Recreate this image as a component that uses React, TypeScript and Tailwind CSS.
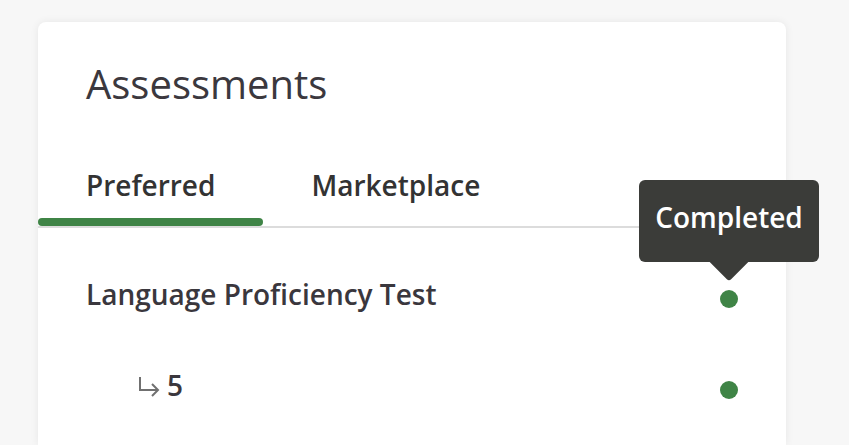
const font = { fontFamily: '"Open Sans", "Noto Sans", sans-serif' };

function StatusDot({ tooltip }: { tooltip?: string }) {
  return (
    <div className="relative mt-[10px] h-[18px] w-[18px] shrink-0 rounded-full bg-[#3f8446]">
      {tooltip && (
        <div className="absolute bottom-[46px] left-1/2 -translate-x-1/2">
          <div className="relative z-10 flex h-[82px] w-[180px] items-center justify-center rounded-md bg-[#3b3c39] pb-[8px] text-[28px] font-semibold leading-none text-white">
            {tooltip}
          </div>
          <div className="absolute left-1/2 top-[64px] h-[31px] w-[31px] -translate-x-1/2 rotate-45 rounded-[3px] bg-[#3b3c39]" />
        </div>
      )}
    </div>
  );
}

function SubArrow() {
  return (
    <svg width="22" height="22" viewBox="0 0 22 22" className="mr-[7px] mt-[4px]">
      <path d="M2 1 V14 H19" fill="none" stroke="#707070" strokeWidth="2" />
      <path d="M14 8 L20 14 L14 20" fill="none" stroke="#707070" strokeWidth="2" />
    </svg>
  );
}

export default function App() {
  return (
    <div className="h-screen overflow-hidden bg-[#f7f7f7] px-[38px] pt-[22px]" style={font}>
      <div className="h-[423px] w-[748px] rounded-t-lg bg-white pt-[42px] shadow-[0_0_8px_rgba(0,0,0,0.07)]">
        <h1 className="px-12 text-[40px] font-normal leading-none text-[#3b383e]">Assessments</h1>

        <div className="mt-[67px] flex border-b-2 border-[#dcdcdc]">
          <button className="flex flex-col">
            <span className="px-12 pb-[19px] text-[28px] font-semibold leading-none text-[#333333]">Preferred</span>
            <span className="h-2 w-full rounded-full bg-[#3f8446]" />
          </button>
          <button className="flex flex-col">
            <span className="px-12 pb-[19px] text-[28px] font-semibold leading-none text-[#333333]">Marketplace</span>
            <span className="h-2 w-full" />
          </button>
        </div>

        <div className="mt-[52px] flex flex-col gap-[63px] pl-12 pr-[48px]">
          <div className="flex items-center justify-between">
            <span className="text-[28px] font-semibold leading-none text-[#3a373d]">Language Proficiency Test</span>
            <StatusDot tooltip="Completed" />
          </div>
          <div className="flex items-center justify-between">
            <div className="flex items-center pl-[52px]">
              <SubArrow />
              <span className="text-[28px] font-semibold leading-none text-[#3a373d]">5</span>
            </div>
            <StatusDot />
          </div>
        </div>
      </div>
    </div>
  );
}
